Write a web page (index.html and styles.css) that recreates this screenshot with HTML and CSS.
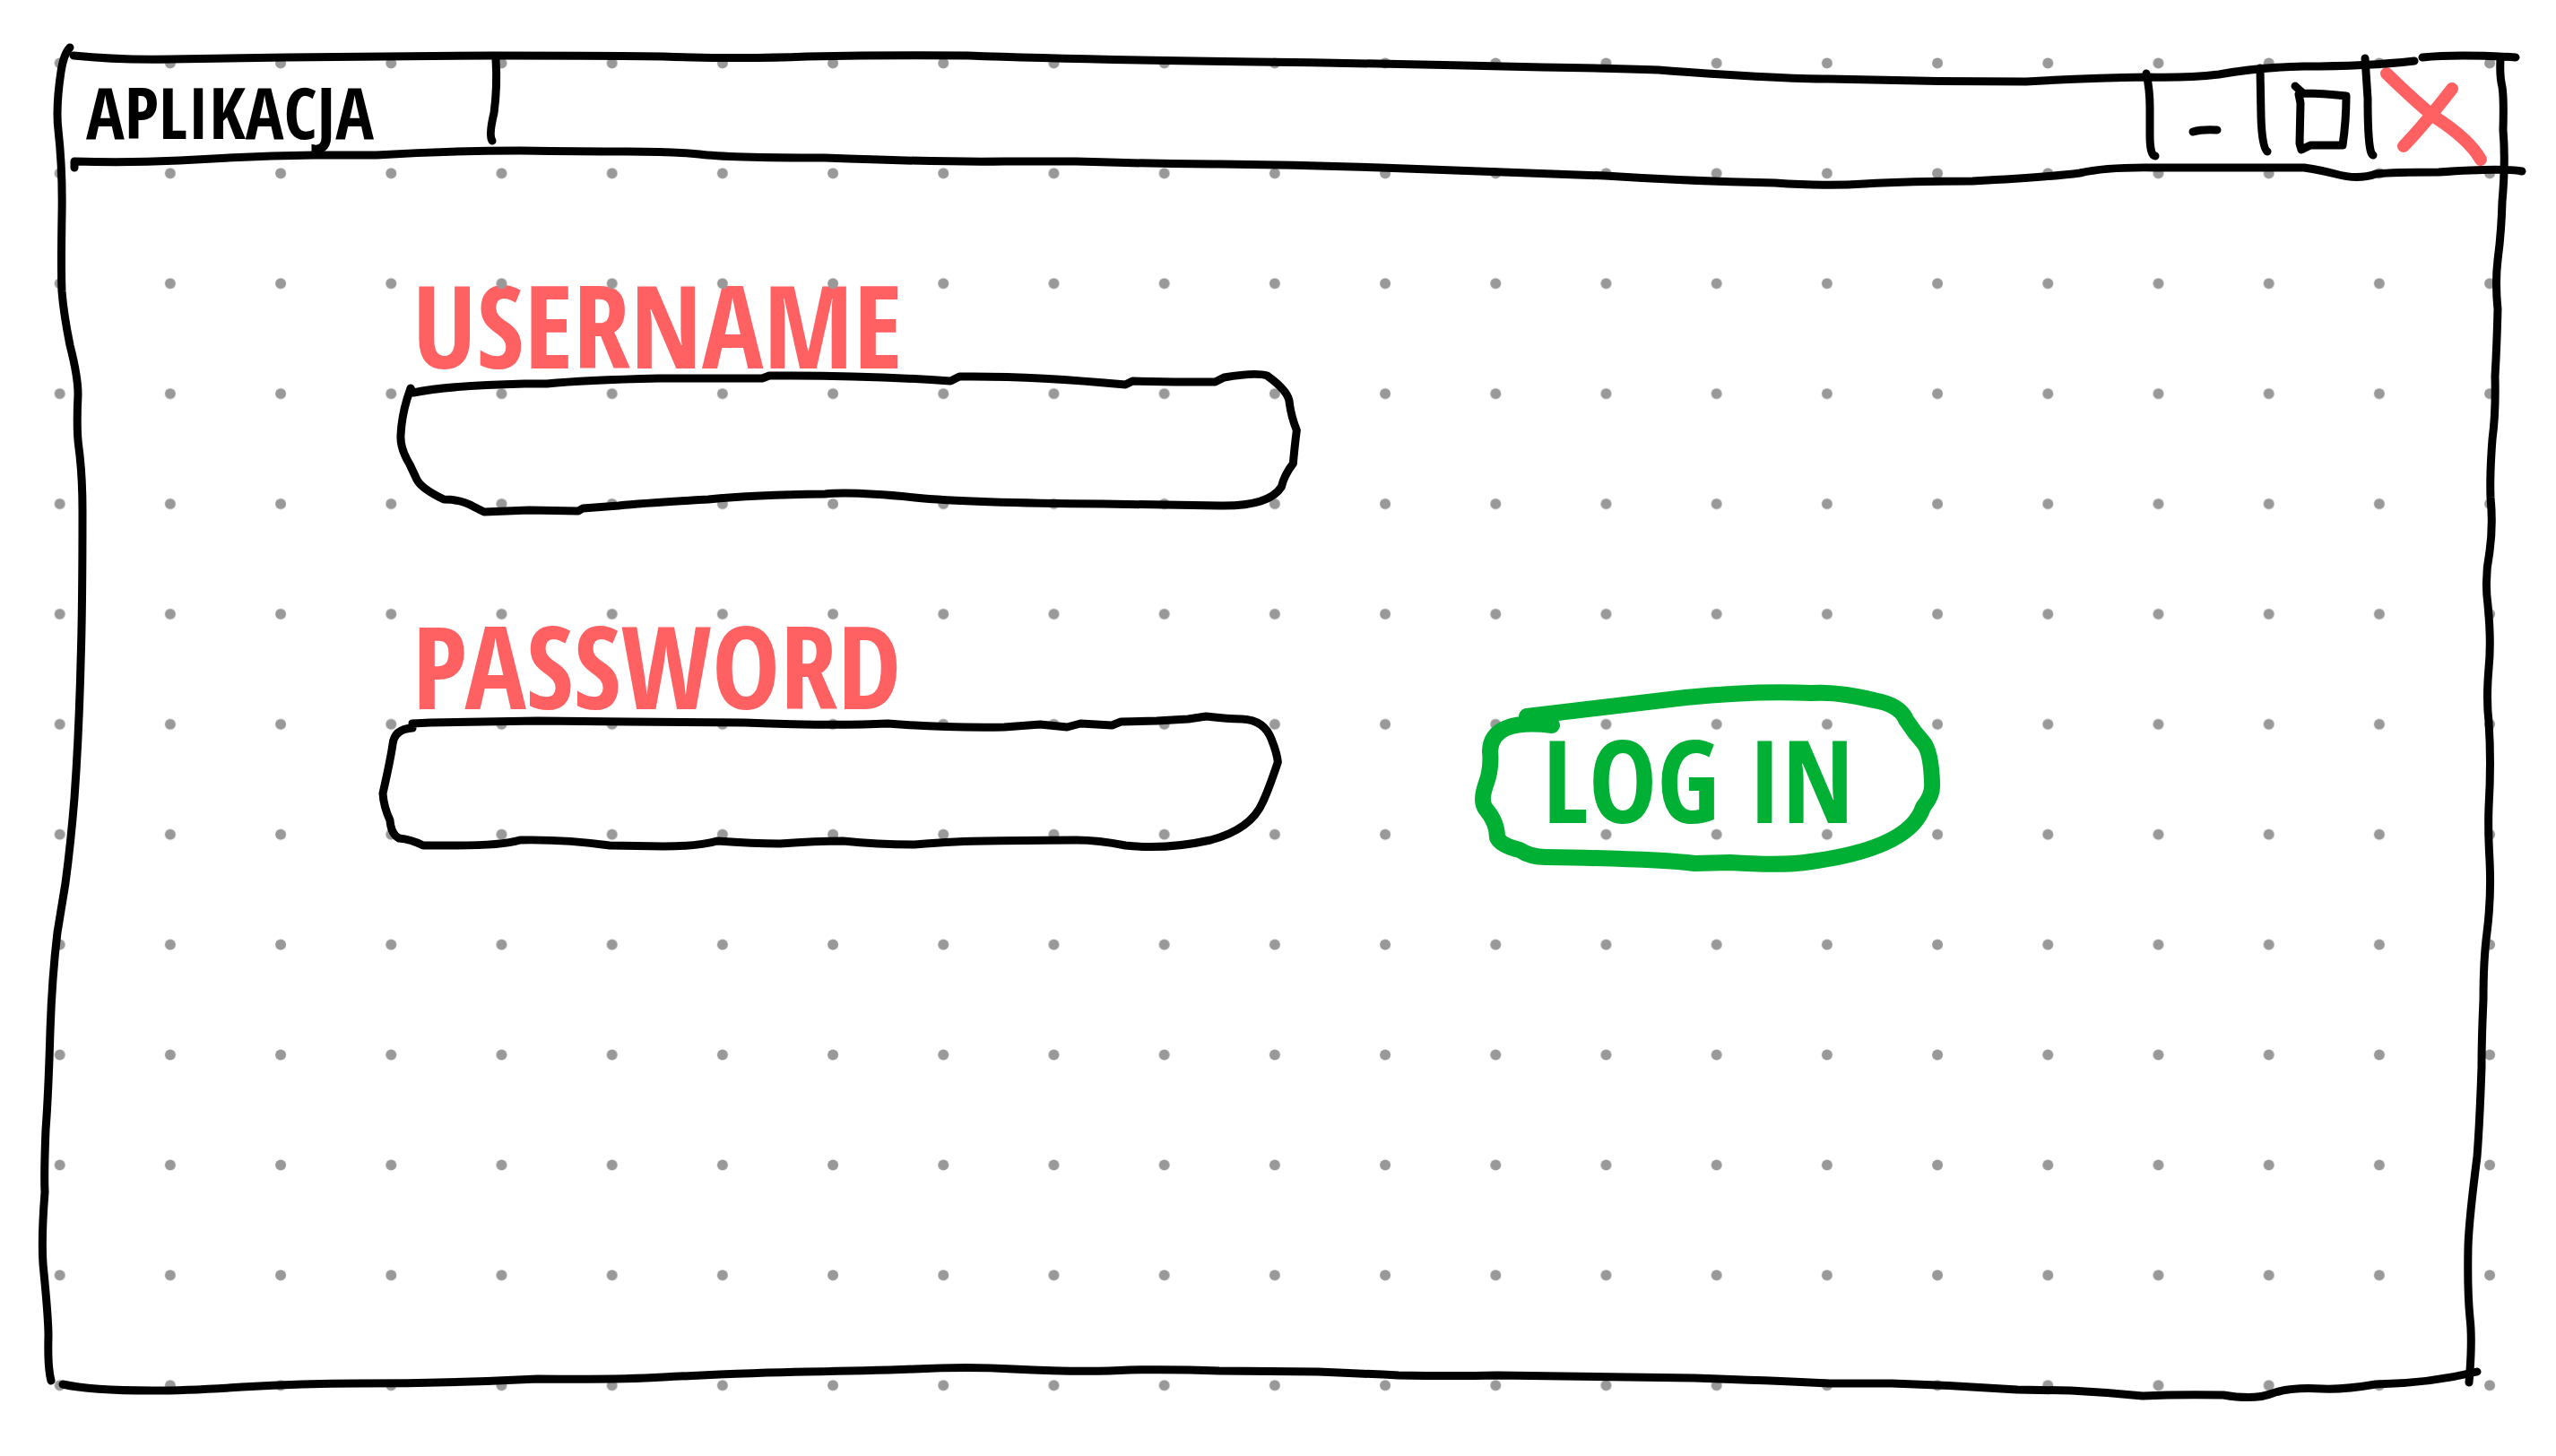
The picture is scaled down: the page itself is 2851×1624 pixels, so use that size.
FILE: index.html
```html
<!DOCTYPE html>
<html lang="pl">
<head>
<meta charset="utf-8">
<meta name="viewport" content="width=device-width, initial-scale=1">
<title>Aplikacja</title>
<link rel="stylesheet" href="styles.css">
</head>
<body>
<div class="window">
  <svg class="backdrop" aria-hidden="true">
    <defs>
      <pattern id="dots" x="5" y="9" width="123.2" height="122.9" patternUnits="userSpaceOnUse">
        <circle cx="61.7" cy="61.4" r="6" fill="#999"/>
      </pattern>
    </defs>
    <rect width="100%" height="100%" fill="url(#dots)"/>
  </svg>
  <!-- left, right and bottom edges of the window -->
  <svg class="ink backdrop" viewBox="0 0 2851 1624" preserveAspectRatio="none" aria-hidden="true">
    <path d="M78 53Q71 60 68 80Q62 120 65 145Q70 190 69 240Q68 300 69 325Q71 350 78 385Q87 420 87 440Q85 480 88 500Q92 530 92 570Q92 680 90 740Q88 820 83 890Q79 940 73 985L64 1040Q58 1090 56 1150Q54 1220 51 1260Q49 1310 50 1330Q46 1380 48 1410Q54 1470 54 1490Q53 1525 57 1540"/>
    <path d="M2789 66Q2788 85 2791 97Q2793 110 2792 145Q2795 180 2791 225Q2790 260 2786 290Q2783 315 2786 345Q2785 385 2783 420Q2784 460 2780 490Q2777 530 2778 555Q2781 585 2777 615Q2771 645 2775 675Q2779 715 2776 745Q2773 780 2776 805Q2779 850 2776 900Q2775 925 2777 960Q2779 1000 2774 1040Q2770 1070 2770 1115Q2768 1160 2768 1190Q2766 1250 2763 1290Q2754 1360 2753 1390Q2752 1440 2755 1470Q2758 1495 2754 1542"/>
    <path d="M70 1544Q100 1551 170 1551Q210 1551 270 1547Q340 1543 400 1543Q500 1543 600 1538Q690 1539 740 1536Q840 1531 900 1530Q970 1529 1020 1527Q1080 1524 1130 1527Q1210 1531 1260 1528Q1310 1527 1360 1529L1470 1530Q1520 1532 1560 1534Q1620 1535 1670 1534L1890 1537Q1980 1540 2040 1543L2110 1543Q2180 1545 2250 1550L2310 1551Q2350 1553 2390 1557Q2430 1555 2480 1556Q2515 1562 2535 1554Q2555 1547 2590 1549Q2615 1550 2650 1544Q2710 1543 2763 1530"/>
  </svg>

  <header class="titlebar">
    <svg class="ink backdrop" viewBox="0 56 2851 136" preserveAspectRatio="none" aria-hidden="true">
      <path d="M82 62Q130 67 190 66L320 64L550 62Q650 62 740 63Q830 66 900 63Q1000 61 1080 62Q1180 66 1400 69Q1560 71 1720 75Q1800 76 1850 78Q1980 88 2040 88Q2150 91 2260 91Q2330 87 2395 86Q2440 87 2475 83Q2520 75 2570 74Q2640 74 2693 68"/>
      <path d="M2702 64Q2740 60 2806 64"/>
      <path d="M83 187L83 180Q140 182 200 179Q280 174 350 173L420 173Q500 168 580 168Q650 169 700 169Q750 169 780 172Q810 176 920 176Q1050 181 1120 180L1200 180Q1300 183 1360 183Q1450 184 1540 187Q1700 193 1790 196Q1880 202 1980 204Q2037 208 2080 205Q2130 202 2200 202Q2280 198 2320 193Q2350 186 2405 187L2570 187Q2590 190 2605 194Q2630 201 2650 194Q2670 192 2720 192Q2790 187 2813 191"/>
    </svg>
    <h1 class="tab">APLIKACJA
      <svg class="ink divider" viewBox="0 0 16 136" aria-hidden="true"><path d="M9 10Q11 40 7 70Q1 95 5 101"/></svg>
    </h1>
    <div class="controls">
      <button class="control" type="button" aria-label="Minimize">
        <svg class="ink icon" viewBox="2388 56 124 136" aria-hidden="true"><path d="M2394 82Q2398 100 2398 120L2398 150Q2398 174 2404 174M2446 147Q2456 144 2473 145"/></svg>
      </button>
      <button class="control" type="button" aria-label="Maximize">
        <svg class="ink icon" viewBox="2512 56 124 136" aria-hidden="true"><path d="M2521 76L2522 130Q2523 165 2529 169M2560 96L2569 104Q2590 104 2617 107Q2617 135 2613 162L2577 162L2567 167L2565 160L2566 115L2564 105"/></svg>
      </button>
      <button class="control" type="button" aria-label="Close">
        <svg class="ink icon" viewBox="2636 56 124 136" aria-hidden="true"><path d="M2638 65L2641 110Q2641 172 2647 173"/><path class="cross" d="M2662 82Q2695 114 2715 130Q2754 155 2767 178M2735 99Q2705 138 2681 163"/></svg>
      </button>
    </div>
  </header>

  <main class="content">
    <form class="login">
      <div class="fields">
        <div class="field">
          <label class="caption" for="username">USERNAME</label>
          <div class="box">
            <svg class="ink backdrop" viewBox="428 412 1026 164" preserveAspectRatio="none" aria-hidden="true"><path d="M458 433L461 438Q500 430 585 428L610 428Q650 424 735 422L850 422L858 419Q960 418 1060 425L1070 420Q1150 419 1255 429L1263 425L1310 426L1355 426L1365 421Q1400 415 1413 419Q1438 437 1438 450Q1440 465 1446 480Q1444 495 1442 517Q1432 530 1429 543Q1415 565 1360 564L1230 562Q1080 561 1020 555Q950 548 920 551Q840 552 790 557Q720 561 690 564L650 567L645 570L590 569L540 571L528 565Q515 557 495 557Q470 545 465 535L457 518Q446 500 447 485Q448 465 454 445Z"/></svg>
            <input class="entry" id="username" name="username" type="text" autocomplete="username">
          </div>
        </div>
        <div class="field">
          <label class="caption" for="password">PASSWORD</label>
          <div class="box">
            <svg class="ink backdrop" viewBox="428 792 1026 164" preserveAspectRatio="none" aria-hidden="true"><path d="M460 812Q440 813 438 830Q436 845 427 885Q428 900 435 915Q436 930 445 935Q458 936 472 943L510 943Q560 943 580 937Q630 936 680 943L740 944Q780 944 800 938Q840 941 870 941Q910 938 940 938Q980 942 1020 942Q1070 938 1100 938Q1160 937 1200 937Q1225 937 1255 943Q1300 948 1350 937Q1395 925 1408 895Q1415 880 1425 850Q1424 840 1418 825Q1410 803 1385 802Q1370 802 1345 799L1325 802L1290 804L1250 805L1240 809L1205 807L1190 811L1160 808L1120 811Q1050 812 990 807Q930 810 830 806L700 805L600 804L480 806L460 807Z"/></svg>
            <input class="entry" id="password" name="password" type="password" autocomplete="current-password">
          </div>
        </div>
      </div>
      <button class="submit" type="button">
        <svg class="ink backdrop" viewBox="1654 764 513 208" preserveAspectRatio="none" aria-hidden="true"><path d="M1731 809Q1663 801 1662 838Q1664 858 1657 876Q1651 894 1657 902Q1670 917 1670 934Q1674 943 1695 948Q1707 956 1724 956Q1850 958 1890 963L1930 962Q1990 966 2020 961Q2130 946 2145 900Q2155 888 2155 876Q2154 838 2145 828Q2135 817 2126 803Q2119 786 2090 781Q2050 771 2020 773Q1960 770 1880 778L1703 799"/></svg>
        <span class="submit-text">LOG IN</span>
      </button>
    </form>
  </main>
</div>
</body>
</html>
```
FILE: styles.css
```css
* {
  box-sizing: border-box;
}

body {
  margin: 0;
  background: #fff;
  color: #000;
  font-family: "Open Sans Condensed", "Roboto Condensed", "Open Sans", sans-serif;
}

.window {
  position: relative;
  min-height: 100vh;
  padding-top: 56px;
}

.backdrop {
  position: absolute;
  inset: 0;
  width: 100%;
  height: 100%;
  overflow: visible;
  pointer-events: none;
}

.ink {
  fill: none;
  stroke: #000;
  stroke-width: 9px;
  stroke-linecap: round;
  stroke-linejoin: round;
}

.ink path {
  vector-effect: non-scaling-stroke;
}

.titlebar {
  position: relative;
  display: flex;
  justify-content: space-between;
  height: 136px;
  padding: 0 91px 0 96px;
}

.tab {
  display: flex;
  align-items: center;
  justify-content: space-between;
  width: 464px;
  margin: 0;
  font-size: 80px;
  line-height: 80px;
}

.divider {
  width: 16px;
  height: 136px;
  overflow: visible;
}

.controls {
  display: flex;
}

.control {
  width: 124px;
  padding: 0;
  border: 0;
  background: none;
}

.icon {
  display: block;
  width: 124px;
  height: 136px;
  overflow: visible;
}

.icon .cross {
  stroke: #ff6163;
  stroke-width: 14px;
}

.content {
  padding: 120px 0 120px 15vw;
}

.login {
  display: grid;
  grid-template-columns: 36vw 18vw;
  column-gap: 7vw;
  align-items: end;
}

.fields {
  display: grid;
  row-gap: 116px;
}

.caption {
  display: block;
  padding-left: 32px;
  color: #ff6163;
  font-size: 128px;
  font-weight: 700;
  line-height: 100px;
}

.box {
  position: relative;
  height: 164px;
}

.entry {
  position: relative;
  width: 100%;
  height: 100%;
  padding: 0 40px;
  border: 0;
  outline: 0;
  background: none;
  color: inherit;
  font: inherit;
  font-size: 80px;
}

.submit {
  position: relative;
  height: 208px;
  margin-bottom: -16px;
  padding: 0 32px 0 0;
  border: 0;
  background: none;
  color: #00b034;
  font: inherit;
  font-size: 128px;
  font-weight: 700;
}

.submit .ink {
  stroke: #00b034;
  stroke-width: 18px;
}

.submit-text {
  position: relative;
}
```
